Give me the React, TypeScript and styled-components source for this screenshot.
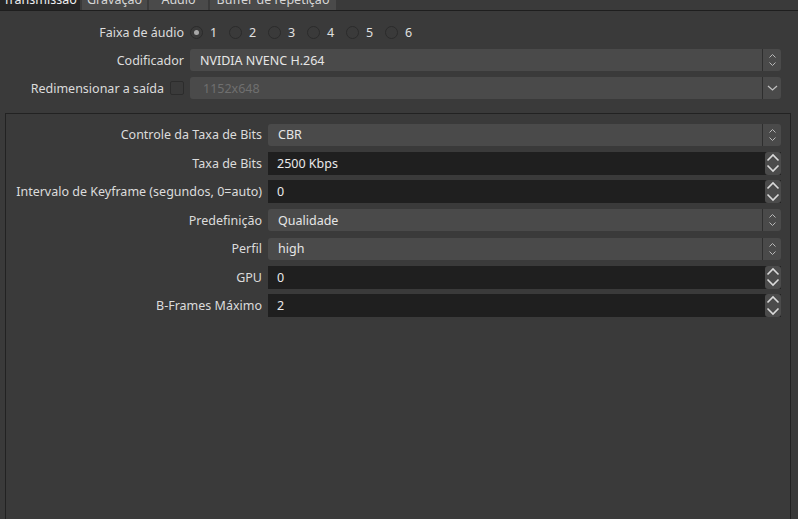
import React from "react";
import styled, { createGlobalStyle } from "styled-components";

const Global = createGlobalStyle`
  html, body { margin: 0; padding: 0; background: #3a3a3a; overflow: hidden; }
  body { font-family: "Noto Sans", "Open Sans", sans-serif; font-size: 12px; color: #dcdcdc; }
  * { box-sizing: border-box; }
`;

const Page = styled.div`
  width: 798px;
  height: 519px;
  background: #3a3a3a;
  overflow: hidden;
  display: flex;
  flex-direction: column;
`;

const TabBar = styled.div`
  display: flex;
  gap: 2px;
  margin-top: -12px;
  height: 23px;
  border-bottom: 1px solid #1e1e1e;
  flex-shrink: 0;
`;

const Tab = styled.div<{ $active?: boolean; $w: number }>`
  height: 22px;
  display: flex;
  align-items: center;
  justify-content: center;
  background: ${(p) => (p.$active ? "#262626" : "#4a4a4a")};
  color: ${(p) => (p.$active ? "#f0f0f0" : "#d6d6d6")};
  font-size: 12.5px;
  white-space: nowrap;
  width: ${(p) => p.$w}px;
`;

const TopForm = styled.div`
  display: grid;
  grid-template-columns: 184px 1fr;
  column-gap: 6px;
  row-gap: 6px;
  padding: 10px 17px 0 0;
  align-items: center;
`;

const Label = styled.div`
  white-space: nowrap;
  color: #dcdcdc;
  font-size: 12.5px;
  display: flex;
  justify-content: flex-end;
  align-items: center;
  gap: 6px;
  height: 22px;
`;

const RadioRow = styled.div`
  display: flex;
  align-items: center;
  height: 22px;
`;

const RadioItem = styled.div`
  display: flex;
  align-items: center;
  width: 39px;
  gap: 7px;
  color: #e0e0e0;
  font-size: 12.5px;
`;

const RadioCircle = styled.span<{ $on?: boolean }>`
  width: 13px;
  height: 13px;
  border-radius: 50%;
  border: 1px solid #2b2b2b;
  background: transparent;
  display: flex;
  align-items: center;
  justify-content: center;
  &::after {
    content: "";
    width: 5px;
    height: 5px;
    border-radius: 50%;
    background: ${(p) => (p.$on ? "#a8a8a8" : "transparent")};
  }
`;

const Check = styled.span`
  width: 14px;
  height: 14px;
  border: 1px solid #2c2c2c;
  background: transparent;
  border-radius: 2px;
`;

const Select = styled.div<{ $disabled?: boolean }>`
  height: 22px;
  background: #4a4a4a;
  border-radius: 3px;
  display: flex;
  align-items: center;
  color: ${(p) => (p.$disabled ? "#6f6f6f" : "#e6e6e6")};
  font-size: 12.5px;
`;

const SelectText = styled.div<{ $pad?: number }>`
  flex: 1;
  padding-left: ${(p) => p.$pad ?? 10}px;
`;

const ArrowBox = styled.div`
  width: 19px;
  height: 22px;
  border-left: 1px solid #2e2e2e;
  display: flex;
  align-items: center;
  justify-content: center;
`;

const Group = styled.div`
  margin: 14px 7px 0 5px;
  flex: 1;
  border: 1px solid #222222;
  border-bottom: none;
  display: grid;
  grid-template-columns: 256px 1fr;
  column-gap: 6px;
  row-gap: 5.5px;
  padding: 9px 9px 0 0;
  align-content: start;
  align-items: center;
`;

const GLabel = styled(Label)`
  height: 23px;
`;

const Spin = styled.div`
  height: 23px;
  display: flex;
  align-items: stretch;
`;

const SpinField = styled.div`
  flex: 1;
  background: #1f1f1f;
  color: #eaeaea;
  font-size: 12.5px;
  padding-left: 9px;
  display: flex;
  align-items: center;
`;

const SpinBtns = styled.div`
  width: 16px;
  display: flex;
  flex-direction: column;
  background: #1f1f1f;
`;

const SpinBtn = styled.div<{ $up?: boolean }>`
  flex: 1;
  background: #4b4b4b;
  border-radius: ${(p) => (p.$up ? "3px 3px 0 0" : "0 0 3px 3px")};
  display: flex;
  align-items: center;
  justify-content: center;
`;

const UpDown = () => (
  <svg width="9" height="14" viewBox="0 0 9 14">
    <path d="M1.5 4.5 L4.5 1.5 L7.5 4.5" stroke="#b8b8b8" strokeWidth="1" fill="none" />
    <path d="M1.5 9.5 L4.5 12.5 L7.5 9.5" stroke="#b8b8b8" strokeWidth="1" fill="none" />
  </svg>
);

const Down = () => (
  <svg width="11" height="8" viewBox="0 0 11 8">
    <path d="M1 2 L5.5 6 L10 2" stroke="#c0c0c0" strokeWidth="1.3" fill="none" />
  </svg>
);

const Chev = ({ up }: { up?: boolean }) => (
  <svg width="14" height="9" viewBox="0 0 14 9">
    <path
      d={up ? "M1.5 7.5 L7 2 L12.5 7.5" : "M1.5 1.5 L7 7 L12.5 1.5"}
      stroke="#dadada"
      strokeWidth="1.6"
      fill="none"
    />
  </svg>
);

const ComboBox = ({ text }: { text: string }) => (
  <Select>
    <SelectText>{text}</SelectText>
    <ArrowBox>
      <UpDown />
    </ArrowBox>
  </Select>
);

const SpinBox = ({ value }: { value: string }) => (
  <Spin>
    <SpinField>{value}</SpinField>
    <SpinBtns>
      <SpinBtn $up>
        <Chev up />
      </SpinBtn>
      <SpinBtn>
        <Chev />
      </SpinBtn>
    </SpinBtns>
  </Spin>
);

const rows: { label: string; kind: "combo" | "spin"; value: string }[] = [
  { label: "Controle da Taxa de Bits", kind: "combo", value: "CBR" },
  { label: "Taxa de Bits", kind: "spin", value: "2500 Kbps" },
  { label: "Intervalo de Keyframe (segundos, 0=auto)", kind: "spin", value: "0" },
  { label: "Predefinição", kind: "combo", value: "Qualidade" },
  { label: "Perfil", kind: "combo", value: "high" },
  { label: "GPU", kind: "spin", value: "0" },
  { label: "B-Frames Máximo", kind: "spin", value: "2" },
];

export default function App() {
  return (
    <Page>
      <Global />
      <TabBar>
        <Tab $active $w={80}>Transmissão</Tab>
        <Tab $w={65}>Gravação</Tab>
        <Tab $w={59}>Áudio</Tab>
        <Tab $w={126}>Buffer de repetição</Tab>
      </TabBar>
      <TopForm>
        <Label>Faixa de áudio</Label>
        <RadioRow>
          {[1, 2, 3, 4, 5, 6].map((n) => (
            <RadioItem key={n}>
              <RadioCircle $on={n === 1} />
              {n}
            </RadioItem>
          ))}
        </RadioRow>
        <Label>Codificador</Label>
        <ComboBox text="NVIDIA NVENC H.264" />
        <Label>
          Redimensionar a saída
          <Check />
        </Label>
        <Select $disabled>
          <SelectText $pad={13}>1152x648</SelectText>
          <ArrowBox>
            <Down />
          </ArrowBox>
        </Select>
      </TopForm>
      <Group>
        {rows.map((r) => (
          <React.Fragment key={r.label}>
            <GLabel>{r.label}</GLabel>
            {r.kind === "combo" ? <ComboBox text={r.value} /> : <SpinBox value={r.value} />}
          </React.Fragment>
        ))}
      </Group>
    </Page>
  );
}
